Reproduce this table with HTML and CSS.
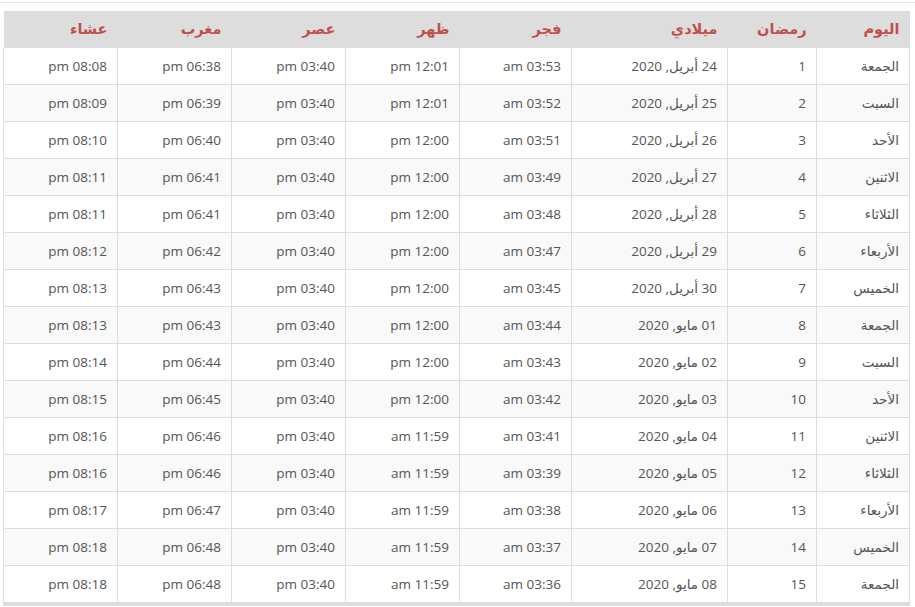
FILE: index.html
```html
<!DOCTYPE html>
<html lang="ar" dir="rtl">
<head>
<meta charset="utf-8">
<link rel="stylesheet" href="styles.css">
</head>
<body>
<div class="wrap">
<table class="times">
<colgroup>
<col class="c-day"><col class="c-ram"><col class="c-date"><col class="c-t1"><col class="c-t"><col class="c-t"><col class="c-t"><col class="c-t">
</colgroup>
<thead>
<tr><th>اليوم</th><th>رمضان</th><th>ميلادي</th><th>فجر</th><th>ظهر</th><th>عصر</th><th>مغرب</th><th>عشاء</th></tr>
</thead>
<tbody>
<tr><td>الجمعة</td><td>1</td><td>24 أبريل, 2020</td><td>03:53 am</td><td>12:01 pm</td><td>03:40 pm</td><td>06:38 pm</td><td>08:08 pm</td></tr>
<tr><td>السبت</td><td>2</td><td>25 أبريل, 2020</td><td>03:52 am</td><td>12:01 pm</td><td>03:40 pm</td><td>06:39 pm</td><td>08:09 pm</td></tr>
<tr><td>الأحد</td><td>3</td><td>26 أبريل, 2020</td><td>03:51 am</td><td>12:00 pm</td><td>03:40 pm</td><td>06:40 pm</td><td>08:10 pm</td></tr>
<tr><td>الاثنين</td><td>4</td><td>27 أبريل, 2020</td><td>03:49 am</td><td>12:00 pm</td><td>03:40 pm</td><td>06:41 pm</td><td>08:11 pm</td></tr>
<tr><td>الثلاثاء</td><td>5</td><td>28 أبريل, 2020</td><td>03:48 am</td><td>12:00 pm</td><td>03:40 pm</td><td>06:41 pm</td><td>08:11 pm</td></tr>
<tr><td>الأربعاء</td><td>6</td><td>29 أبريل, 2020</td><td>03:47 am</td><td>12:00 pm</td><td>03:40 pm</td><td>06:42 pm</td><td>08:12 pm</td></tr>
<tr><td>الخميس</td><td>7</td><td>30 أبريل, 2020</td><td>03:45 am</td><td>12:00 pm</td><td>03:40 pm</td><td>06:43 pm</td><td>08:13 pm</td></tr>
<tr><td>الجمعة</td><td>8</td><td>01 مايو, 2020</td><td>03:44 am</td><td>12:00 pm</td><td>03:40 pm</td><td>06:43 pm</td><td>08:13 pm</td></tr>
<tr><td>السبت</td><td>9</td><td>02 مايو, 2020</td><td>03:43 am</td><td>12:00 pm</td><td>03:40 pm</td><td>06:44 pm</td><td>08:14 pm</td></tr>
<tr><td>الأحد</td><td>10</td><td>03 مايو, 2020</td><td>03:42 am</td><td>12:00 pm</td><td>03:40 pm</td><td>06:45 pm</td><td>08:15 pm</td></tr>
<tr><td>الاثنين</td><td>11</td><td>04 مايو, 2020</td><td>03:41 am</td><td>11:59 am</td><td>03:40 pm</td><td>06:46 pm</td><td>08:16 pm</td></tr>
<tr><td>الثلاثاء</td><td>12</td><td>05 مايو, 2020</td><td>03:39 am</td><td>11:59 am</td><td>03:40 pm</td><td>06:46 pm</td><td>08:16 pm</td></tr>
<tr><td>الأربعاء</td><td>13</td><td>06 مايو, 2020</td><td>03:38 am</td><td>11:59 am</td><td>03:40 pm</td><td>06:47 pm</td><td>08:17 pm</td></tr>
<tr><td>الخميس</td><td>14</td><td>07 مايو, 2020</td><td>03:37 am</td><td>11:59 am</td><td>03:40 pm</td><td>06:48 pm</td><td>08:18 pm</td></tr>
<tr><td>الجمعة</td><td>15</td><td>08 مايو, 2020</td><td>03:36 am</td><td>11:59 am</td><td>03:40 pm</td><td>06:48 pm</td><td>08:18 pm</td></tr>
</tbody>
</table>
</div>
</body>
</html>
```
FILE: styles.css
```css
html, body {
  margin: 0;
  padding: 0;
  background: #fff;
}
body {
  font-family: "Open Sans", "DejaVu Sans", sans-serif;
  font-size: 13.5px;
  color: #555;
}
.wrap {
  margin-top: 2px;
  border-top: 1px solid #e3e3e3;
  padding: 8px 5px 0 4px;
}
.times {
  width: 100%;
  border-collapse: collapse;
  table-layout: fixed;
  border-bottom: 4px solid #ddd;
}
.c-day { width: 93px; }
.c-ram { width: 89px; }
.c-date { width: 156px; }
.c-t1 { width: 112px; }
.c-t { width: 114px; }
.times th {
  background: #ddd;
  color: #c0504d;
  font-family: "DejaVu Sans", sans-serif;
  font-weight: bold;
  font-size: 14.5px;
  text-align: right;
  padding: 8px 10px 8px 8px;
  line-height: 21px;
  border: 0;
}
.times td {
  text-align: right;
  padding: 8px 10px 8px 8px;
  line-height: 20px;
  border: 1px solid #ddd;
  white-space: nowrap;
}
.times tbody tr:first-child td { border-top: 0; }
.times tbody tr:nth-child(even) td { background: #f9f9f9; }
```
